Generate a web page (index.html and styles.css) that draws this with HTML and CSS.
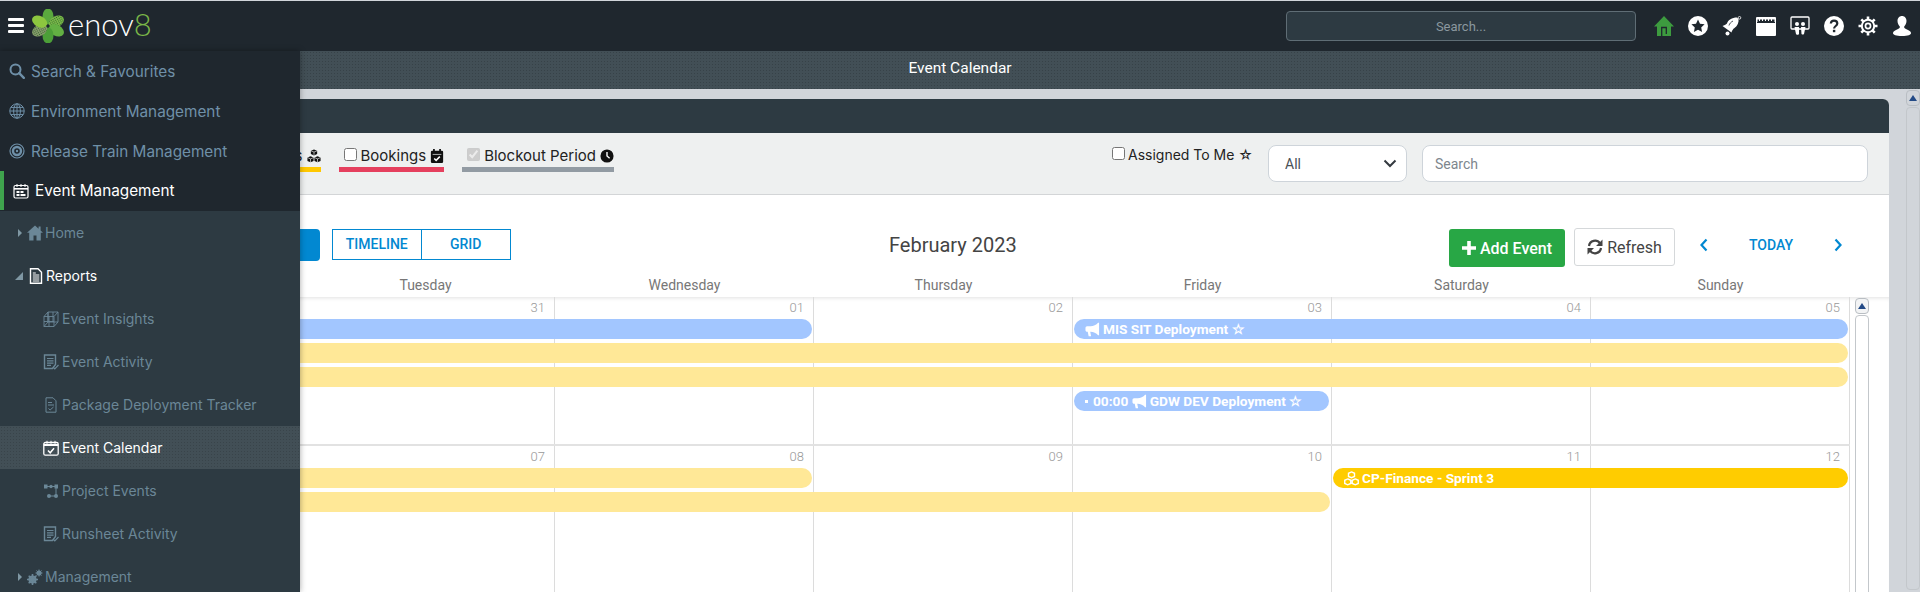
FILE: index.html
```html
<!DOCTYPE html>
<html>
	<head>
		<meta charset="utf-8" />
		<title>Event Calendar</title>
		<link rel="stylesheet" href="styles.css">
	</head>
	<body>
		<svg class="sprite">
			<symbol id="i-search" viewBox="0 0 16 16"><circle cx="6.500" cy="6.500" r="5" fill="none" stroke="currentColor" stroke-width="2"/><path d="M10.200 10.200l4.600 4.600" stroke="currentColor" stroke-width="2.400" stroke-linecap="round"/></symbol>
			<symbol id="i-globe" viewBox="0 0 16 16"><g fill="none" stroke="currentColor" stroke-width="1"><circle cx="8" cy="8" r="7.200"/><ellipse cx="8" cy="8" rx="3.400" ry="7.200"/><path d="M8 .8v14.400M.8 8h14.400M1.800 4.400h12.400M1.800 11.600h12.400"/></g></symbol>
			<symbol id="i-target" viewBox="0 0 16 16"><circle cx="8" cy="8" r="7" fill="none" stroke="currentColor" stroke-width="1.200"/><circle cx="8" cy="8" r="4" fill="none" stroke="currentColor" stroke-width="2.400"/><circle cx="8" cy="8" r="1.200" fill="currentColor"/></symbol>
			<symbol id="i-cal" viewBox="0 0 16 16"><rect x="1" y="2.500" width="14" height="12.500" rx="1.500" fill="none" stroke="currentColor" stroke-width="1.200"/><path d="M1 5.800h14" stroke="currentColor" stroke-width="1.600"/><path d="M4 1v3M8 1v3M12 1v3" stroke="currentColor" stroke-width="1"/><path d="M3.500 8h3v2h-3zM7.500 8h3v2h-3zM3.500 11h3v2h-3zM7.500 11h5v2h-5z" fill="currentColor"/></symbol>
			<symbol id="i-home" viewBox="0 0 16 16"><path d="M8 .5L0 7.700h2.200V15.500h4.300v-5h3v5h4.300V7.700H16l-2.400-2.200V1.500h-2v2.200z" fill="currentColor"/></symbol>
			<symbol id="i-doc" viewBox="0 0 16 16"><path d="M2.500 .8h7.500l3.500 3.400v11h-11z" fill="none" stroke="currentColor" stroke-width="1.400"/><path d="M4.800 7h6.500M4.800 9h6.500M4.800 11h6.500M4.800 13h6.500M4.800 5h3" stroke="currentColor" stroke-width="1"/></symbol>
			<symbol id="i-cube" viewBox="0 0 16 16"><g fill="none" stroke="currentColor" stroke-width=".9"><path d="M1 5.500h10v10H1zM5 1h10v10H5zM1 5.500L5 1M11 5.500L15 1M1 15.500L5 11M11 15.500L15 11M6 5.500v10M1 10.500h10M5 1v10M10 1v10"/></g></symbol>
			<symbol id="i-list" viewBox="0 0 16 16"><path d="M1.500 1h11v9.500l-3 4h-8z" fill="none" stroke="currentColor" stroke-width="1.400"/><path d="M4 4.500h6.500M4 6.800h6.500M4 9.100h6.500M4 11.400h4" stroke="currentColor" stroke-width="1.200"/><path d="M10 13l1.800 1.800L15.500 11" fill="none" stroke="currentColor" stroke-width="1.200"/></symbol>
			<symbol id="i-check-doc" viewBox="0 0 16 16"><path d="M3 .8h7l3 3v11.400H3z" fill="none" stroke="currentColor" stroke-width="1"/><path d="M5 5.500h4M5 8h6" stroke="currentColor"/><path d="M5.500 11.500l1.600 1.500 3.400-3" fill="none" stroke="currentColor"/></symbol>
			<symbol id="i-cal-check" viewBox="0 0 16 16"><rect x=".8" y="2.500" width="14.400" height="12.700" rx="1.500" fill="none" stroke="currentColor" stroke-width="1.300"/><path d="M.8 5h14.400" stroke="currentColor" stroke-width="2"/><path d="M4 .8v3M8 .8v3M12 .8v3" stroke="currentColor"/><path d="M5 10.500l2.200 2.300L11 8.200" fill="none" stroke="currentColor" stroke-width="1.500"/></symbol>
			<symbol id="i-cal-solid" viewBox="0 0 16 16"><rect x="1" y="2" width="14" height="14" rx="1.500" fill="currentColor"/><path d="M4.500 0v4M11.500 0v4" stroke="currentColor" stroke-width="2"/><path d="M3 6.200h10" stroke="#eef0f0" stroke-width=".8"/><path d="M4.800 10.800l2.200 2.200 4.200-4.300" fill="none" stroke="#fff" stroke-width="1.700"/></symbol>
			<symbol id="i-nodes" viewBox="0 0 16 16"><path d="M1 1.500h3.500v4H1zM11.500 1.500H15v4h-3.500z" fill="currentColor"/><circle cx="8" cy="3.500" r="1.700" fill="currentColor"/><circle cx="6" cy="13" r="2" fill="currentColor"/><circle cx="13" cy="13" r="2" fill="currentColor"/><path d="M4 3.500h8M13 5v7M6 13h7" stroke="currentColor"/></symbol>
			<symbol id="i-gears" viewBox="0 0 16 16"><circle cx="5.500" cy="10.500" r="3" fill="none" stroke="currentColor" stroke-width="2.200"/><path d="M5.500 5v11M0 10.500h11M1.700 6.700l7.600 7.600M1.700 14.300l7.600-7.600" stroke="currentColor" stroke-width="1.600"/><circle cx="12" cy="4" r="1.800" fill="none" stroke="currentColor" stroke-width="1.500"/><path d="M12 .5v7M8.500 4h7M9.500 1.500l5 5M9.500 6.500l5-5" stroke="currentColor"/></symbol>
			<symbol id="i-cubes" viewBox="0 0 16 16"><path d="M8 .5l3.600 1.500v3.800L8 7.300 4.400 5.800V2zM4 8.300l3.500 1.500v3.900L4 15.200.5 13.700V9.800zM12 8.300l3.500 1.500v3.900L12 15.200l-3.500-1.500V9.800z" fill="currentColor"/><path d="M4.400 2L8 3.500 11.600 2M8 3.500v3.800M.5 9.800L4 11.300l3.500-1.500M4 11.300v3.900M8.500 9.800l3.500 1.500 3.500-1.500M12 11.300v3.900" fill="none" stroke="#fff" stroke-width=".7"/></symbol>
			<symbol id="i-cubes-line" viewBox="0 0 16 16"><g fill="none" stroke="currentColor" stroke-width="1.500"><path d="M8 1l3.200 1.400v3.400L8 7.200 4.800 5.800V2.400zM4 8.500l3.200 1.400v3.400L4 14.700.8 13.300V9.900zM12 8.500l3.200 1.400v3.400L12 14.700l-3.200-1.400V9.900z"/></g></symbol>
			<symbol id="i-horn" viewBox="0 0 16 16"><path d="M15 .8h-1C12 3 9 4.500 6 4.500H2.200A1.700 1.700 0 0 0 .5 6.200v2.600c0 .9.800 1.700 1.700 1.700h.7l1 4.700h2.600l-.9-4.700H6c3 0 6 1.500 8 3.700h1z" fill="currentColor"/></symbol>
			<pattern id="petal-dots" width="2" height="2" patternUnits="userSpaceOnUse"><rect width="1" height="1" fill="#2f6b2a"/></pattern>
		</svg>

		<header class="topbar">
			<svg class="menu-btn" viewBox="0 0 16 15"><path d="M1 1.500h14M1 7.500h14M1 13.500h14" stroke="#fff" stroke-width="2.800" stroke-linecap="round"/></svg>
			<svg class="logo-mark" viewBox="0 0 32 34">
				<g transform="translate(16 17)">
					<ellipse cx="0" cy="-9.500" rx="5.500" ry="8" fill="#5aa83e"/>
					<ellipse cx="0" cy="-9.500" rx="5.500" ry="8" fill="#7cb94a" transform="rotate(62)"/>
					<ellipse cx="0" cy="-9.500" rx="5.500" ry="8" fill="url(#petal-dots)" transform="rotate(62)"/>
					<ellipse cx="0" cy="-9.500" rx="5.500" ry="8" fill="#63b043" transform="rotate(118)"/>
					<ellipse cx="0" cy="-9.500" rx="5.500" ry="8" fill="#4c9f38" transform="rotate(180)"/>
					<ellipse cx="0" cy="-9.500" rx="5.500" ry="8" fill="#8a9a6e" transform="rotate(242)"/>
					<ellipse cx="0" cy="-9.500" rx="5.500" ry="8" fill="url(#petal-dots)" transform="rotate(242)"/>
					<ellipse cx="0" cy="-9.500" rx="5.500" ry="8" fill="#8cc63f" transform="rotate(298)"/>
				</g>
			</svg>
			<div class="logo-text">enov<span class="logo-8">8</span></div>
			<input class="top-search" type="text" placeholder="Search...">
			<nav class="top-icons">
				<svg class="top-icon" viewBox="0 0 20 20"><path d="M10 0L0 10.500h3V20h14v-9.500h3z" fill="#3d9b3f"/><path d="M7.700 20v-8.500h4.600V18" fill="none" stroke="#1f272e" stroke-width="1.300"/></svg>
				<svg class="top-icon" viewBox="0 0 20 20"><circle cx="10" cy="10" r="10" fill="#fff"/><path d="M10 3.500l2 4.300 4.600.5-3.400 3.200.9 4.600-4.100-2.300-4.100 2.300.9-4.600-3.400-3.200 4.600-.5z" fill="#1f272e"/></svg>
				<svg class="top-icon" viewBox="0 0 20 20"><path d="M15 1.500C10 1.500 6 4 5 7.500 4 8.500 2 9.500.5 10L9.500 16.500C10 14.500 11 13 12.500 12c3-2 4.500-6 4-9z" fill="#fff"/><circle cx="17.500" cy="1.800" r="1.300" fill="none" stroke="#fff" stroke-width=".8"/><circle cx="5.500" cy="17.500" r="2" fill="#fff"/><path d="M7 9.500c.5-2 2-3.500 4-4.500" fill="none" stroke="#1f272e" stroke-width=".8"/></svg>
				<svg class="top-icon" viewBox="0 0 20 20"><rect y="1" width="20" height="19" rx="1" fill="#fff"/><path d="M1 6.500h18" stroke="#1f272e" stroke-width="1"/><path d="M1.500 3.500h17v2.500h-17z" fill="#1f272e"/><path d="M3.500 1v4M6.500 1v4M9.500 1v4M12.500 1v4M15.500 1v4" stroke="#fff" stroke-width="1"/></svg>
				<svg class="top-icon" viewBox="0 0 20 20"><rect x="1" y="1" width="18" height="12" rx="1" fill="none" stroke="#fff" stroke-width="1.300"/><circle cx="7" cy="8" r="2" fill="#fff"/><circle cx="13" cy="8" r="2" fill="#fff"/><path d="M4.500 11h4.500v7a2 2 0 0 1-3 0zM11 11h4.500l-1.500 7a2 2 0 0 1-2.500 0z" fill="#fff"/></svg>
				<svg class="top-icon" viewBox="0 0 20 20"><circle cx="10" cy="10" r="10" fill="#fff"/><path d="M6.800 7.500C7 5.500 8.500 4.700 10 4.700c2 0 3.300 1.200 3.300 2.800 0 2.500-3.200 2.500-3.200 5" fill="none" stroke="#1f272e" stroke-width="2.200"/><rect x="8.900" y="13.800" width="2.400" height="2.400" fill="#1f272e"/></svg>
				<svg class="top-icon" viewBox="0 0 20 20"><path d="M10 .5v19M.5 10h19M3.300 3.300l13.400 13.400M3.300 16.700L16.700 3.300" stroke="#fff" stroke-width="2.600"/><circle cx="10" cy="10" r="7.200" fill="#fff"/><circle cx="10" cy="10" r="5.200" fill="#1f272e"/><circle cx="10" cy="10" r="3.400" fill="#fff"/><circle cx="10" cy="10" r="1.700" fill="#1f272e"/></svg>
				<svg class="top-icon" viewBox="0 0 20 20"><path d="M10 0c2.800 0 4.500 2.200 4.500 5 0 2.500-1.300 4.500-2.300 5.500-.5 1.500 1 2.300 3.300 3.300 2 .8 3.500 1.700 3.500 3.500 0 1.500-3 2.700-9 2.700s-9-1.200-9-2.700c0-1.800 1.500-2.700 3.500-3.500 2.300-1 3.800-1.800 3.300-3.300-1-1-2.300-3-2.300-5.500C5.500 2.200 7.200 0 10 0z" fill="#fff"/></svg>
			</nav>
		</header>

		<div class="titlebar">Event Calendar</div>

		<div class="page">
			<main class="card">
				<div class="card-head"></div>
				<div class="filters">
					<div class="legends">
						<label class="legend legend-gold"><input type="checkbox">Releases <svg class="legend-icon"><use href="#i-cubes"/></svg></label>
						<label class="legend legend-red"><input type="checkbox">Bookings <svg class="legend-icon"><use href="#i-cal-solid"/></svg></label>
						<label class="legend legend-grey"><input type="checkbox" checked disabled>Blockout Period
							<svg class="legend-icon" viewBox="0 0 16 16"><circle cx="8" cy="8" r="7.500" fill="#111"/><path d="M8 3.500V8l3 2.500" fill="none" stroke="#fff" stroke-width="1.600"/></svg>
						</label>
					</div>
					<label class="assigned"><input type="checkbox">Assigned To Me ☆</label>
					<select class="filter-select"><option>All</option></select>
					<input class="filter-search" type="text" placeholder="Search">
				</div>

				<div class="toolbar">
					<button class="btn-month">MONTH</button>
					<div class="views"><span class="view">TIMELINE</span><span class="view">GRID</span></div>
					<h2 class="month-title">February 2023</h2>
					<div class="actions">
						<button class="btn-add"><svg class="add-plus" viewBox="0 0 14 14"><path d="M7 0v14M0 7h14" stroke="#fff" stroke-width="3.600"/></svg>Add Event</button>
						<button class="btn-refresh">
							<svg class="refresh-icon" viewBox="0 0 16 16"><g fill="none" stroke="#444" stroke-width="2.200"><path d="M2 7A6 6 0 0 1 13 4.500"/><path d="M14 9A6 6 0 0 1 3 11.500"/></g><path d="M15.500 .5v6.500H9zM.5 15.500V9H7z" fill="#444"/></svg>Refresh
						</button>
						<div class="nav-links">
							<svg class="chev" viewBox="0 0 8 14"><path d="M6.500 1.500L1.500 7l5 5.500" fill="none" stroke="#0288d1" stroke-width="2.200"/></svg>
							<span class="today">TODAY</span>
							<svg class="chev" viewBox="0 0 8 14"><path d="M1.500 1.500l5 5.500-5 5.500" fill="none" stroke="#0288d1" stroke-width="2.200"/></svg>
						</div>
					</div>
				</div>

				<div class="weekdays">
					<div>Monday</div><div>Tuesday</div><div>Wednesday</div><div>Thursday</div><div>Friday</div><div>Saturday</div><div>Sunday</div>
				</div>

				<div class="cal-body">
					<div class="weeks">
						<div class="week week-first">
							<div class="day d1">30</div><div class="day d2">31</div><div class="day d3">01</div><div class="day d4">02</div><div class="day d5">03</div><div class="day d6">04</div><div class="day d7">05</div>
							<div class="ev ev-blue r1 to-wed"></div>
							<div class="ev ev-blue r1 fri-sun"><svg class="ev-icon"><use href="#i-horn"/></svg>MIS SIT Deployment ☆</div>
							<div class="ev ev-yellow r2 all"></div>
							<div class="ev ev-yellow r3 all"></div>
							<div class="ev ev-blue r4 fri-only"><span class="dot"></span>00:00 <svg class="ev-icon"><use href="#i-horn"/></svg>GDW DEV Deployment ☆</div>
						</div>
						<div class="week">
							<div class="day d1">06</div><div class="day d2">07</div><div class="day d3">08</div><div class="day d4">09</div><div class="day d5">10</div><div class="day d6">11</div><div class="day d7">12</div>
							<div class="ev ev-yellow r1 to-wed"></div>
							<div class="ev ev-yellow r2 to-fri"></div>
							<div class="ev ev-gold r1 sat-sun"><svg class="ev-icon"><use href="#i-cubes-line"/></svg>CP-Finance - Sprint 3</div>
						</div>
					</div>
					<div class="scroll scroll-inner"><div class="scroll-btn"></div><div class="scroll-track"></div></div>
				</div>
			</main>
			<div class="scroll scroll-page"><div class="scroll-btn"></div><div class="scroll-track"></div></div>
		</div>

		<aside class="sidebar">
			<ul class="menu-top">
				<li class="menu-item"><svg class="menu-icon"><use href="#i-search"/></svg>Search &amp; Favourites</li>
				<li class="menu-item"><svg class="menu-icon"><use href="#i-globe"/></svg>Environment Management</li>
				<li class="menu-item"><svg class="menu-icon"><use href="#i-target"/></svg>Release Train Management</li>
				<li class="menu-item menu-current"><svg class="menu-icon"><use href="#i-cal"/></svg>Event Management</li>
			</ul>
			<ul class="menu-sub">
				<li class="sub-item"><span class="caret"></span><svg class="sub-icon"><use href="#i-home"/></svg>Home</li>
				<li class="sub-item sub-open"><span class="caret-open"></span><svg class="sub-icon"><use href="#i-doc"/></svg>Reports</li>
				<li class="sub-item child"><svg class="sub-icon"><use href="#i-cube"/></svg>Event Insights</li>
				<li class="sub-item child"><svg class="sub-icon"><use href="#i-list"/></svg>Event Activity</li>
				<li class="sub-item child"><svg class="sub-icon"><use href="#i-check-doc"/></svg>Package Deployment Tracker</li>
				<li class="sub-item child active"><svg class="sub-icon"><use href="#i-cal-check"/></svg>Event Calendar</li>
				<li class="sub-item child"><svg class="sub-icon"><use href="#i-nodes"/></svg>Project Events</li>
				<li class="sub-item child"><svg class="sub-icon"><use href="#i-list"/></svg>Runsheet Activity</li>
				<li class="sub-item"><span class="caret"></span><svg class="sub-icon"><use href="#i-gears"/></svg>Management</li>
			</ul>
		</aside>
	</body>
</html>
```

FILE: styles.css
```css
*{
	box-sizing: border-box;
}
html,body{
	height:592px;
	overflow:hidden;
}
body{
	margin:0;
	padding-top:1px;
	background-color:#d1d5da;
	font-family:Roboto,"Liberation Sans",sans-serif;
	color:#333;
}
.sprite{
	position:absolute;
	width:0;
	height:0;
}
ul{
	list-style:none;
	margin:0;
	padding:0;
}

/* top bar */
.topbar{
	display:flex;
	align-items:center;
	height:50px;
	padding-left:8px;
	background-color:#1f272e;
}
.menu-btn{
	width:16px;
	height:15px;
	margin-top:-1px;
}
.logo-mark{
	width:32px;
	height:34px;
	margin-left:8px;
	margin-top:-1px;
}
.logo-text{
	margin-left:4px;
	margin-top:-4px;
	font-family:Lato,sans-serif;
	font-weight:300;
	font-size:31px;
	line-height:40px;
	color:#fff;
}
.logo-8{
	color:#7ab648;
}
.top-search{
	width:350px;
	height:30px;
	margin-left:auto;
	background-color:#2d3a42;
	border:1px solid #5f6d75;
	border-radius:4px;
	text-align:center;
	font-family:Roboto,sans-serif;
	font-size:13px;
	color:#fff;
}
.top-search::placeholder{
	color:#8b989f;
}
.top-icons{
	display:flex;
	gap:14px;
	margin-left:18px;
	margin-right:8px;
}
.top-icon{
	width:20px;
	height:20px;
	display:block;
}

.titlebar{
	height:38px;
	line-height:34px;
	text-align:center;
	font-size:15.500px;
	color:#fff;
	background-color:#424f56;
	background-image:radial-gradient(rgba(0,0,0,.16) .6px,transparent .8px);
	background-size:3px 3px;
}

/* page */
.page{
	display:flex;
	align-items:flex-start;
	height:503px;
	overflow:hidden;
}
.card{
	flex:0 0 1879px;
	height:493px;
	margin:10px 0 0 10px;
	background-color:#fff;
	overflow:hidden;
	border-radius:0 6px 0 0;
}
.card-head{
	height:34px;
	background-color:#2d3a42;
}
.filters{
	display:flex;
	align-items:flex-start;
	height:62px;
	padding:14px 21px 0 0;
	background-color:#eef0f0;
	border-bottom:1px solid #d3d5d7;
}
.legends{
	flex:0 0 604px;
	display:flex;
	justify-content:flex-end;
	gap:18px;
}
.legend{
	display:flex;
	align-items:flex-start;
	height:25px;
	padding-left:5px;
	border-bottom:5px solid #999;
	font-family:Inter,sans-serif;
	font-size:15px;
	line-height:18px;
	color:#222;
	white-space:nowrap;
}
.legend input,.assigned input{
	margin:1px 4px 0 0;
}
.legend-icon{
	width:14px;
	height:14px;
	margin:2px 0 0 4px;
	color:#111;
}
.legend-gold{
	border-color:#ffc800;
}
.legend-red{
	border-color:#e5405e;
}
.legend-grey{
	border-color:#929ba3;
}
.assigned{
	display:flex;
	align-items:flex-start;
	margin-left:auto;
	font-family:Inter,sans-serif;
	font-size:14px;
	line-height:16px;
	color:#222;
	white-space:nowrap;
}
.assigned input{
	margin:0 3px 0 0;
}
.filter-select{
	width:139px;
	height:37px;
	margin:-2px 0 0 15px;
	padding-left:16px;
	appearance:none;
	background:#fff url("data:image/svg+xml,%3Csvg xmlns='http://www.w3.org/2000/svg' width='14' height='9'%3E%3Cpath d='M1.500 1.500L7 7l5.500-5.500' fill='none' stroke='%23343a40' stroke-width='2'/%3E%3C/svg%3E") no-repeat right 9px center;
	border:1px solid #ced4da;
	border-radius:8px;
	font-family:Roboto,sans-serif;
	font-size:14px;
	color:#495057;
}
.filter-search{
	width:446px;
	height:37px;
	margin:-2px 0 0 15px;
	padding-left:12px;
	background-color:#fff;
	border:1px solid #ced4da;
	border-radius:8px;
	font-family:Roboto,sans-serif;
	font-size:14px;
}
.filter-search::placeholder{
	color:#7d868d;
}

/* calendar toolbar */
.toolbar{
	display:flex;
	align-items:flex-start;
	height:81px;
	padding:34px 0 0 190px;
}
.btn-month{
	width:120px;
	height:32px;
	background-color:#0288d1;
	border:0;
	border-radius:4px;
	color:#fff;
}
.views{
	display:flex;
	margin-left:12px;
	border:1.500px solid #0288d1;
}
.view{
	width:88.500px;
	height:29px;
	line-height:29px;
	text-align:center;
	font-size:14px;
	font-weight:500;
	color:#0288d1;
}
.view:first-child{
	border-right:1.500px solid #0288d1;
}
.month-title{
	margin:0 0 0 378px;
	font-size:20px;
	font-weight:400;
	line-height:32px;
	color:#444;
}
.actions{
	display:flex;
	align-items:flex-start;
	width:401px;
	margin-left:auto;
	margin-right:39px;
}
.btn-add{
	display:flex;
	align-items:center;
	justify-content:center;
	width:116px;
	height:38px;
	background-color:#28a745;
	border:0;
	border-radius:3px;
	font-family:Roboto,sans-serif;
	font-size:16px;
	font-weight:500;
	color:#fff;
}
.add-plus{
	width:14px;
	height:14px;
	margin-right:4px;
}
.btn-refresh{
	display:flex;
	align-items:center;
	justify-content:center;
	width:101px;
	height:38px;
	margin:-1px 0 0 9px;
	background-color:#fff;
	border:1px solid #d5d8da;
	border-radius:3px;
	font-family:Roboto,sans-serif;
	font-size:16px;
	color:#444;
}
.refresh-icon{
	width:16px;
	height:16px;
	margin-right:4px;
}
.nav-links{
	display:flex;
	align-items:center;
	justify-content:space-between;
	width:142px;
	height:32px;
	margin-left:25px;
}
.chev{
	width:8px;
	height:14px;
}
.today{
	font-size:14px;
	font-weight:500;
	color:#0288d1;
}

/* calendar grid */
.weekdays{
	display:grid;
	grid-template-columns:repeat(7,259px);
	height:21px;
	margin-left:27px;
	text-align:center;
	font-size:14px;
	line-height:19px;
	color:#777;
}
.cal-body{
	display:flex;
	position:relative;
	box-shadow:inset 0 4px 4px -3px rgba(0,0,0,.12);
}
.weeks{
	margin-left:27px;
}
.week{
	display:grid;
	grid-template-columns:repeat(7,259px);
	grid-template-rows:22px repeat(4,24px) 1fr;
	height:149px;
	border-bottom:2px solid #e2e2e2;
}
.week:last-child{
	height:160px;
	border-bottom:0;
}
.day{
	grid-row:1 / -1;
	padding:3px 9px 0 0;
	border-right:1px solid #dcdcdc;
	text-align:right;
	font-size:13px;
	font-weight:300;
	line-height:15px;
	color:#999;
}
.d1{grid-column:1;}
.d2{grid-column:2;}
.d3{grid-column:3;}
.d4{grid-column:4;}
.d5{grid-column:5;}
.d6{grid-column:6;}
.d7{grid-column:7;}
.ev{
	display:flex;
	align-items:center;
	height:20px;
	padding-left:11px;
	border-radius:10px;
	font-size:13.700px;
	font-weight:700;
	color:#fff;
	white-space:pre;
	overflow:hidden;
}
.ev-blue{
	background-color:#a2c6ff;
}
.ev-yellow{
	background-color:#ffe897;
}
.ev-gold{
	background-color:#ffcc00;
}
.r1{grid-row:2;}
.r2{grid-row:3;}
.r3{grid-row:4;}
.r4{grid-row:5;}
.to-wed{
	grid-column:1 / 4;
	margin:0 2px 0 0;
}
.all{
	grid-column:1 / 8;
	margin:0 2px 0 0;
}
.to-fri{
	grid-column:1 / 6;
	margin:0 2px 0 0;
}
.fri-sun{
	grid-column:5 / 8;
	margin:0 2px 0 1px;
}
.fri-only{
	grid-column:5 / 6;
	margin:0 3px 0 1px;
}
.sat-sun{
	grid-column:6 / 8;
	margin:0 2px 0 1px;
}
.ev-icon{
	width:15px;
	height:15px;
	margin-right:3px;
	color:#fff;
}
.dot{
	width:3px;
	height:3px;
	margin-right:5px;
	background-color:#fff;
}

/* scrollbars */
.scroll{
	flex:none;
	display:flex;
	flex-direction:column;
	gap:1px;
}
.scroll-btn{
	position:relative;
	height:16px;
	border:1px solid #b9bec3;
	border-radius:4px;
	background-color:#f3f4f5;
}
.scroll-btn::after{
	content:"";
	position:absolute;
	left:50%;
	top:4px;
	margin-left:-4px;
	border:4px solid transparent;
	border-top:0;
	border-bottom:6px solid #234a86;
}
.scroll-track{
	flex:1;
	border:1px solid #c3c7cb;
	border-radius:4px;
	background-color:#fff;
}
.scroll-inner{
	width:14px;
	height:320px;
	margin-left:5px;
	margin-top:1px;
}
.scroll-page{
	width:14px;
	height:500px;
	margin:1px 0 0 17px;
}
.scroll-page .scroll-btn{
	background-color:#d1d5da;
}
.scroll-page .scroll-track{
	background-color:#d1d5da;
}

/* sidebar lies over the calendar */
.sidebar{
	position:absolute;
	top:51px;
	left:0;
	bottom:0;
	width:300px;
	overflow:hidden;
	background-color:#2d3a42;
	box-shadow:0 0 6px rgba(0,0,0,.35);
	font-family:Inter,sans-serif;
	font-size:14px;
}
.menu-top{
	height:160px;
	background-color:#1f272e;
	box-shadow:0 -1px 0 #2c3a38;
	font-size:15.300px;
}
.menu-item{
	display:flex;
	align-items:center;
	height:40px;
	padding-left:9px;
	color:#6f90a8;
	white-space:nowrap;
}
.menu-icon{
	width:16px;
	height:16px;
	margin-right:6px;
}
.menu-current{
	height:39px;
	padding-left:13px;
	color:#fff;
	box-shadow:inset 4px 0 0 #3fa34d;
}
.sub-item{
	display:flex;
	align-items:center;
	height:43px;
	padding-left:18px;
	color:#6b8797;
	white-space:nowrap;
}
.caret{
	width:0;
	height:0;
	margin-right:5px;
	border-left:4px solid #7f97a3;
	border-top:4px solid transparent;
	border-bottom:4px solid transparent;
}
.caret-open{
	width:0;
	height:0;
	margin:0 5px 0 -3px;
	border-left:8px solid transparent;
	border-bottom:8px solid #7f97a3;
}
.sub-icon{
	width:16px;
	height:16px;
	margin-right:2px;
	flex:none;
}
.sub-open{
	color:#fff;
}
.child{
	padding-left:43px;
}
.child .sub-icon{
	margin-right:3px;
}
.active{
	color:#fff;
	background-color:#424f56;
	background-image:radial-gradient(rgba(0,0,0,.14) .6px,transparent .8px);
	background-size:3px 3px;
}
```
